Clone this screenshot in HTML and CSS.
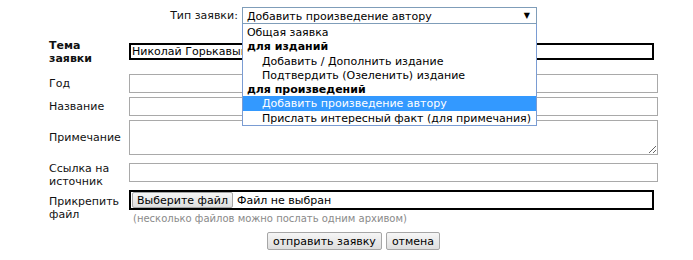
FILE: index.html
```html
<!DOCTYPE html>
<html lang="ru">
<head>
    <meta charset="UTF-8">
    <title>Заявка</title>
    <link rel="stylesheet" href="styles.css">
</head>
<body>
    <div class="form">
        <div class="type-row">
            <span class="type-label">Тип заявки:</span>
            <div class="select">
                <span class="select-value">Добавить произведение автору</span>
                <span class="select-arrow">▼</span>
                <ul class="dropdown">
                    <li class="opt">Общая заявка</li>
                    <li class="group">для изданий</li>
                    <li class="opt sub">Добавить / Дополнить издание</li>
                    <li class="opt sub">Подтвердить (Озеленить) издание</li>
                    <li class="group">для произведений</li>
                    <li class="opt sub active">Добавить произведение автору</li>
                    <li class="opt sub">Прислать интересный факт (для примечания)</li>
                </ul>
            </div>
        </div>

        <div class="row row-theme">
            <div class="label bold">Тема<br>заявки</div>
            <input class="field field-dark" type="text" value="Николай Горькавый">
        </div>
        <div class="row row-year">
            <div class="label">Год</div>
            <input class="field" type="text">
        </div>
        <div class="row row-title">
            <div class="label">Название</div>
            <input class="field" type="text">
        </div>
        <div class="row row-note">
            <div class="label">Примечание</div>
            <textarea class="field area"></textarea>
        </div>
        <div class="row row-link">
            <div class="label">Ссылка на<br>источник</div>
            <input class="field field-top" type="text">
        </div>
        <div class="row row-file">
            <div class="label">Прикрепить<br>файл</div>
            <div class="file-cell">
                <div class="file-box">
                    <button class="btn file-btn" type="button">Выберите файл</button>
                    <span class="file-name">Файл не выбран</span>
                </div>
                <div class="hint">(несколько файлов можно послать одним архивом)</div>
            </div>
        </div>

        <div class="actions">
            <button class="btn" type="button">отправить заявку</button>
            <button class="btn" type="button">отмена</button>
        </div>
    </div>
</body>
</html>
```

FILE: styles.css
```css
* {
    margin: 0;
    padding: 0;
    box-sizing: border-box;
}

body {
    font-family: 'DejaVu Sans', Verdana, sans-serif;
    font-size: 11px;
    color: #000;
    background: #fff;
}

.form {
    width: 609px;
    margin-left: 49px;
    padding-top: 7px;
}

/* Request type select, shown opened */
.type-row {
    display: flex;
    justify-content: center;
    align-items: center;
    gap: 4px;
}

.type-label {
    line-height: 17px;
    color: #111;
}

.select {
    position: relative;
    width: 295px;
    height: 17px;
    border: 1px solid #7f9db9;
    display: flex;
    align-items: center;
    padding-left: 4px;
}

.select-value {
    flex: 1;
    line-height: 15px;
    padding-top: 1px;
}

.select-arrow {
    font-size: 8px;
    width: 18px;
    text-align: center;
}

.dropdown {
    position: absolute;
    top: 16px;
    left: -1px;
    width: 295px;
    list-style: none;
    background: #fff;
    border: 1px solid #7a9cd3;
    border-top: none;
    padding-top: 1px;
    z-index: 2;
}

.dropdown li {
    height: 14.3px;
    line-height: 15px;
    padding-left: 4px;
    white-space: nowrap;
}

.dropdown .group {
    font-weight: bold;
}

.dropdown .sub {
    padding-left: 19px;
}

.dropdown .active {
    background: #3399ff;
    color: #fff;
}

/* Form rows */
.row {
    display: grid;
    grid-template-columns: 80px 529px;
    align-items: center;
}

.label {
    line-height: 13px;
    color: #111;
}

.bold {
    font-weight: bold;
    padding-top: 1px;
}

.field {
    width: 529px;
    height: 19px;
    border: 1px solid #a9a9a9;
    font-family: inherit;
    font-size: 11px;
    padding: 0 2px;
    outline: none;
}

.field-dark {
    width: 525px;
    height: 17px;
    border: 2px solid #000;
    padding: 0 1px;
}

.area {
    height: 35px;
    display: block;
}

.row-theme { margin-top: 14px; }
.row-year { margin-top: 9px; }
.row-title { margin-top: 4px; }
.row-note { margin-top: 4px; }
.row-link { margin-top: 7px; }
.row-file { margin-top: 2px; }

.field-top {
    align-self: start;
    margin-top: 1px;
}

/* File picker */
.file-box {
    width: 525px;
    height: 20px;
    border: 2px solid #000;
    display: flex;
    align-items: center;
    gap: 4px;
    padding-left: 1px;
}

.file-name {
    color: #000;
}

.hint {
    margin-top: 2px;
    padding-left: 4px;
    font-size: 10px;
    line-height: 13px;
    color: #8a8a8a;
}

/* Buttons */
.btn {
    font-family: inherit;
    font-size: 11px;
    color: #000;
    height: 18px;
    padding: 0 5px;
    border: 1px solid #a6a6a6;
    border-radius: 2px;
    background: linear-gradient(#f6f6f6, #dedede);
}

.file-btn {
    height: 16px;
    padding: 0 4px;
}

.actions {
    margin-top: 7px;
    display: flex;
    justify-content: center;
    gap: 4px;
}
```
